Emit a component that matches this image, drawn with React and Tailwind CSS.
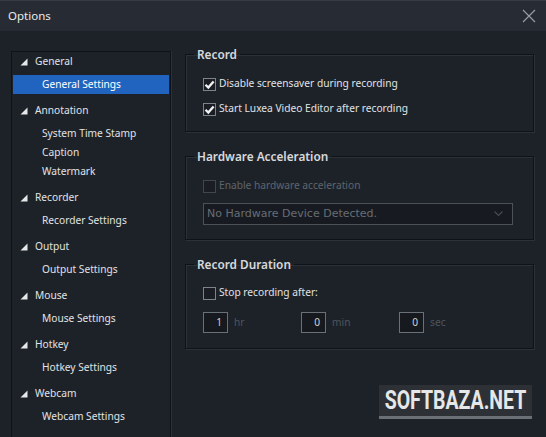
import React from "react";

const tree = [
  { name: "General", children: ["General Settings"] },
  { name: "Annotation", children: ["System Time Stamp", "Caption", "Watermark"] },
  { name: "Recorder", children: ["Recorder Settings"] },
  { name: "Output", children: ["Output Settings"] },
  { name: "Mouse", children: ["Mouse Settings"] },
  { name: "Hotkey", children: ["Hotkey Settings"] },
  { name: "Webcam", children: ["Webcam Settings"] },
];

function Tri() {
  return (
    <svg width="8" height="8" viewBox="0 0 8 8" className="shrink-0">
      <path d="M7.5 0.5 L7.5 7.5 L0.5 7.5 Z" fill="#e6e8ea" />
    </svg>
  );
}

function Check({ checked, disabled }) {
  return (
    <div
      className={
        "w-[13px] h-[13px] shrink-0 border flex items-center justify-center bg-[#1a1e24] " +
        (disabled ? "border-[#41464d]" : "border-[#7d838a]")
      }
    >
      {checked && (
        <svg width="11" height="11" viewBox="0 0 11 11">
          <path d="M1.5 5.8 L4.3 8.6 L9.6 2.4" stroke="#f2f2f2" strokeWidth="2.3" fill="none" />
        </svg>
      )}
    </div>
  );
}

function Group({ title, children, className = "" }) {
  return (
    <fieldset className="border border-[#0f1216] shadow-[1px_1px_0_#2b3139,inset_1px_1px_0_#2b3139]">
      <legend className="ml-[8px] px-[3px] text-[11.8px] leading-[16px] font-semibold text-[#d7d9dc]">
        {title}
      </legend>
      <div className={className}>{children}</div>
    </fieldset>
  );
}

export default function App() {
  return (
    <div
      className="w-[546px] h-[437px] bg-[#1d2229] flex flex-col overflow-hidden relative text-[#e1e3e5]"
      style={{ fontFamily: '"Noto Sans", "Open Sans", sans-serif' }}
    >
      {/* Title bar */}
      <div className="h-[31px] shrink-0 bg-[#272c34] border-t border-[#353b43] flex items-center justify-between pl-[8px] pr-[10px]">
        <span className="text-[11.5px] text-[#e8eaec]">Options</span>
        <svg width="14" height="14" viewBox="0 0 14 14">
          <path d="M1 1 L13 13 M13 1 L1 13" stroke="#9aa0a7" strokeWidth="1.1" />
        </svg>
      </div>

      <div className="flex flex-1 items-start pl-[11px]">
        {/* Sidebar */}
        <div className="mt-[20px] w-[160px] h-[400px] shrink-0 border border-[#0f1216] shadow-[1px_0_0_#2b3139] px-[1px] text-[10.2px]">
          {tree.map((g, gi) => (
            <div key={g.name} className={gi === 0 ? "" : "mt-[7px]"}>
              <div className="h-[19px] flex items-center gap-[7px] pl-[7px] mb-[4px]">
                <Tri />
                <span>{g.name}</span>
              </div>
              {g.children.map((c) => (
                <div
                  key={c}
                  className={
                    "h-[19px] flex items-center pl-[29px] " +
                    (c === "General Settings" ? "bg-[#2064c0] text-white" : "")
                  }
                >
                  {c}
                </div>
              ))}
            </div>
          ))}
        </div>

        {/* Main */}
        <div className="ml-[14px] mt-[15px] w-[349px] flex flex-col gap-[16px] text-[10.2px]">
          <Group title="Record" className="pt-[12px] pb-[12px] pl-[17px]">
            <div className="flex flex-col gap-[5px]">
              <label className="h-[20px] flex items-center gap-[3px]">
                <Check checked />
                <span>Disable screensaver during recording</span>
              </label>
              <label className="h-[20px] flex items-center gap-[3px]">
                <Check checked />
                <span>Start Luxea Video Editor after recording</span>
              </label>
            </div>
          </Group>

          <Group title="Hardware Acceleration" className="pt-[12px] pb-[14px] pl-[17px]">
            <label className="h-[20px] flex items-center gap-[3px] text-[#5f656c]">
              <Check disabled />
              <span>Enable hardware acceleration</span>
            </label>
            <div className="mt-[7px] w-[310px] h-[22px] border border-[#4b5159] bg-[#171b21] flex items-center justify-between pl-[3px] pr-[9px]">
              <span
                className="text-[11px] text-[#676d74]"
                style={{ fontFamily: '"DejaVu Sans", sans-serif' }}
              >
                No Hardware Device Detected.
              </span>
              <svg width="9" height="6" viewBox="0 0 9 6">
                <path d="M0.5 0.5 L4.5 4.5 L8.5 0.5" stroke="#474c53" strokeWidth="1.1" fill="none" />
              </svg>
            </div>
          </Group>

          <Group title="Record Duration" className="pt-[11px] pb-[15px] pl-[17px]">
            <label className="h-[20px] flex items-center gap-[3px]">
              <Check />
              <span>Stop recording after:</span>
            </label>
            <div className="mt-[9px] flex items-center">
              {[
                ["1", "hr"],
                ["0", "min"],
                ["0", "sec"],
              ].map(([v, u]) => (
                <div key={u} className="w-[98px] flex items-center gap-[6px]">
                  <div className="w-[25px] h-[21px] border border-[#6a7077] bg-[#161a1f] flex items-center justify-end pr-[5px] text-[#cfd2d5]">
                    {v}
                  </div>
                  <span className="text-[#4f555c]">{u}</span>
                </div>
              ))}
            </div>
          </Group>
        </div>
      </div>

      {/* Watermark overlay */}
      <div className="absolute left-[379px] top-[385px] w-[153px] h-[34px] bg-[#2d3136] border-b-[3px] border-[#6b7076] flex items-center justify-center">
        <span
          className="inline-block text-[19.5px] leading-none font-bold text-[#e6e7e8] scale-y-[1.3] whitespace-nowrap"
          style={{ fontFamily: 'Roboto, sans-serif' }}
        >
          SOFTBAZA.NET
        </span>
      </div>
    </div>
  );
}
